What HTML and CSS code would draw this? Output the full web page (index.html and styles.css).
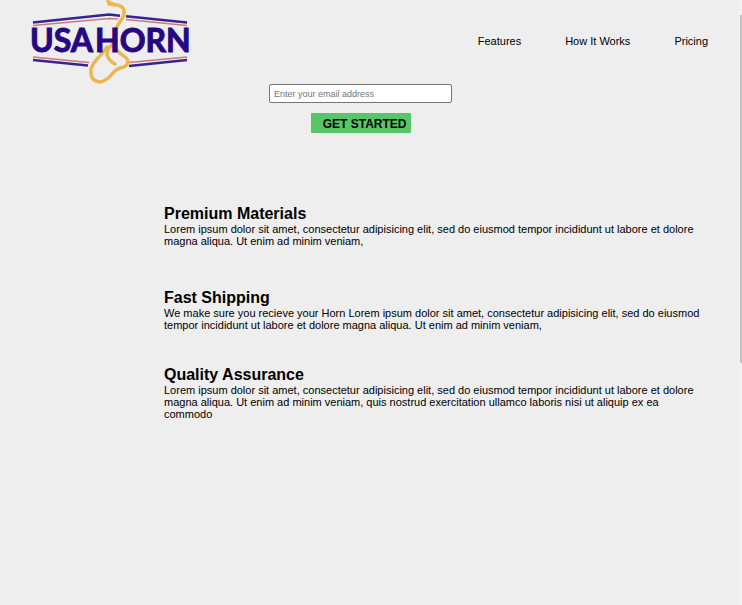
FILE: index.html
```html
<!DOCTYPE html>
<html lang="en">
<head>
<meta charset="utf-8">
<meta name="viewport" content="width=device-width, initial-scale=1">
<title>USA Horn</title>
<link rel="stylesheet" href="styles.css">
</head>
<body>
<header class="header">
  <svg class="logo" viewBox="0 0 160 84" role="img" aria-label="USA Horn">
    <g fill="none">
      <g stroke="#cf7777" stroke-width="1.4">
        <path d="M3 25.5 79 18.5 88 19M96 19.5 157 25.5M3 57 59 62.500M99 62.500 157 57"/>
      </g>
      <g stroke="#382392" stroke-width="2.4">
        <path d="M3 22.500 79 14.500 90 15.800M96 16.200 157 22.500M3 60 58 65.500M99 66 157 60"/>
      </g>
      <g stroke="#edb550" stroke-width="3.400" stroke-linecap="round" stroke-linejoin="round">
        <path d="M78 1 79 4 87 5Q97 7 93 17Q89 23 85 30M86 41Q76 49 77 55Q79 61 85 64"/>
        <path d="M87 50Q90 54 94 56Q102 62 94 67Q87 68 83 73Q76 82 69 82Q60 81 61 69Q63 63 69 57Q74 51 77 47"/>
      </g>
      <path d="M77 0 85 3 79 6Z" fill="#edb550"/>
    </g>
    <text class="logo-word" x="0" y="52">USA</text>
    <text class="logo-word" x="65" y="52">HORN</text>
  </svg>
  <nav class="nav">
    <a href="#features">Features</a>
    <a href="#how-it-works">How It Works</a>
    <a href="#pricing">Pricing</a>
  </nav>
</header>
<main>
  <form class="signup" id="form">
    <input class="email" type="email" name="email" aria-label="Email address" placeholder="Enter your email address">
    <button class="submit" type="submit">GET STARTED</button>
  </form>
  <section class="features" id="features">
    <article class="feature">
      <h2>Premium Materials</h2>
      <p>Lorem ipsum dolor sit amet, consectetur adipisicing elit, sed do eiusmod tempor incididunt ut labore et dolore magna aliqua. Ut enim ad minim veniam,</p>
    </article>
    <article class="feature">
      <h2>Fast Shipping</h2>
      <p>We make sure you recieve your Horn Lorem ipsum dolor sit amet, consectetur adipisicing elit, sed do eiusmod tempor incididunt ut labore et dolore magna aliqua. Ut enim ad minim veniam,</p>
    </article>
    <article class="feature">
      <h2>Quality Assurance</h2>
      <p>Lorem ipsum dolor sit amet, consectetur adipisicing elit, sed do eiusmod tempor incididunt ut labore et dolore magna aliqua. Ut enim ad minim veniam, quis nostrud exercitation ullamco laboris nisi ut aliquip ex ea commodo</p>
    </article>
  </section>
</main>
<div class="scroll-track" aria-hidden="true"><div class="scroll-thumb"></div></div>
</body>
</html>
```
FILE: styles.css
```css
* {
  box-sizing: border-box;
  margin: 0;
  padding: 0;
}

body {
  min-height: 100vh;
  background: #eee;
  color: #000;
  font-family: "Liberation Sans", Arial, sans-serif;
  font-size: 11px;
  line-height: 12px;
}

.header {
  display: flex;
  justify-content: space-between;
  align-items: center;
  padding: 0 34px 0 30px;
}

.logo {
  display: block;
  width: 160px;
}

.logo-word {
  fill: #280880;
  stroke: #280880;
  stroke-width: 1px;
  font-family: Lato, sans-serif;
  font-size: 32px;
  font-weight: 700;
}

.nav {
  display: flex;
  gap: 44px;
  padding-bottom: 2px;
}

.nav a {
  color: inherit;
  text-decoration: none;
}

.signup {
  display: flex;
  flex-direction: column;
  align-items: center;
  gap: 10px;
  padding-right: 21px;
}

.email {
  width: 183px;
  height: 19px;
  padding: 0 4px;
  border: 1px solid #767676;
  border-radius: 2px;
  background: #fff;
  font-family: inherit;
  font-size: 9px;
}

.email::placeholder {
  color: #757575;
}

.submit {
  width: 100px;
  height: 20px;
  padding: 2px 4px 0 0;
  border: 0;
  border-radius: 1px;
  background: #57c568;
  color: #000;
  font-family: "Liberation Sans", Arial, sans-serif;
  font-size: 12px;
  font-weight: 900;
  text-align: right;
}

.features {
  display: flex;
  flex-direction: column;
  gap: 35px;
  padding: 72px 36px 0 164px;
}

.feature:first-child {
  padding-bottom: 7px;
}

.feature h2 {
  font-size: 16px;
  line-height: 18px;
}

.scroll-track {
  position: fixed;
  top: 0;
  right: 0;
  bottom: 0;
  width: 4px;
  padding: 15px 0 0 2px;
  background: #f1f1f1;
}

.scroll-thumb {
  height: 59%;
  background: #c1c1c1;
}
```
